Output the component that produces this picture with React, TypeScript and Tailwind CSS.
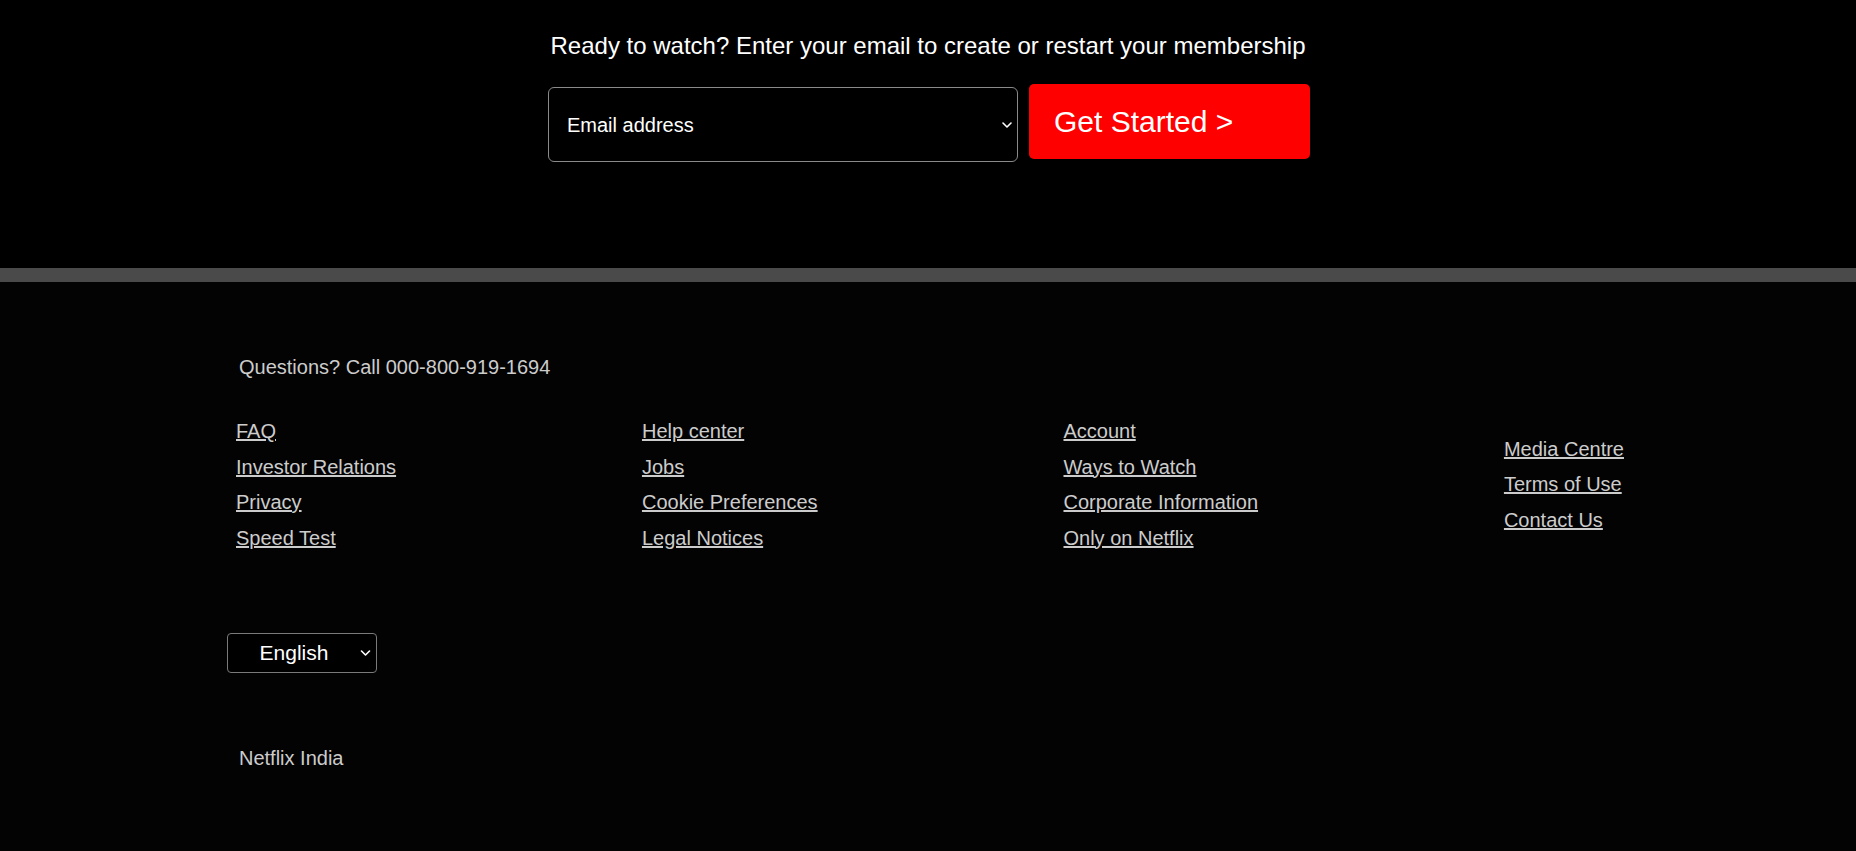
const footerColumns = [
  ["FAQ", "Investor Relations", "Privacy", "Speed Test"],
  ["Help center", "Jobs", "Cookie Preferences", "Legal Notices"],
  ["Account", "Ways to Watch", "Corporate Information", "Only on Netflix"],
  ["Media Centre", "Terms of Use", "Contact Us"],
];

function Chevron({ className }: { className?: string }) {
  return (
    <svg
      viewBox="0 0 10 6"
      fill="none"
      stroke="currentColor"
      strokeWidth="1.6"
      strokeLinecap="round"
      strokeLinejoin="round"
      className={className}
    >
      <path d="M1 1l4 4 4-4" />
    </svg>
  );
}

export default function App() {
  return (
    <div className="min-h-screen bg-[#030303] font-['Liberation_Sans',Arial,sans-serif]">
      <section className="h-[268px] bg-black pt-[32px]">
        <h3 className="text-center text-[24px] leading-[28px] text-white">
          Ready to watch? Enter your email to create or restart your membership
        </h3>
        <form className="ml-[2px] mt-[24px] flex items-start justify-center gap-[11px]">
          <div className="relative mt-[3px] h-[75px] w-[470px]">
            <select
              defaultValue="email"
              className="h-full w-full appearance-none rounded-[6px] border border-[#8a8a8a] bg-black pl-[18px] text-[20px] text-white outline-none"
            >
              <option value="email">Email address</option>
            </select>
            <Chevron className="pointer-events-none absolute right-[6px] top-[35px] h-[6px] w-[10px] text-white" />
          </div>
          <button
            type="button"
            className="h-[75px] w-[281px] rounded-[5px] bg-[#ff0000] pl-[25px] text-left text-[30px] text-white"
          >
            Get Started &gt;
          </button>
        </form>
      </section>

      <div className="h-[14px] bg-[#4a4a4a]" />

      <footer className="pb-[80px] pt-[74px]">
        <div className="mx-auto w-[1392px]">
          <p className="pl-[7px] text-[20px] leading-[23px] text-[#cccccc]">
            Questions? Call 000-800-919-1694
          </p>

          <div className="mt-[41px] flex items-center justify-between pl-[4px]">
            {footerColumns.map((col, i) => (
              <ul key={i} className="flex flex-col gap-[12.5px]">
                {col.map((item) => (
                  <li key={item} className="text-[20px] leading-[23px]">
                    <a href="#" className="text-[#cccccc] underline">
                      {item}
                    </a>
                  </li>
                ))}
              </ul>
            ))}
          </div>

          <div className="relative -ml-[5px] mt-[83px] h-[40px] w-[150px]">
            <select
              defaultValue="en"
              className="h-full w-full appearance-none rounded-[4px] border border-[#7a7a7a] bg-black pr-[16px] text-center text-[21px] text-white outline-none"
            >
              <option value="en">English</option>
              <option value="hi">हिन्दी</option>
            </select>
            <Chevron className="pointer-events-none absolute right-[6px] top-[17px] h-[6px] w-[11px] text-white" />
          </div>

          <p className="mt-[74px] pl-[7px] text-[20px] leading-[23px] text-[#cccccc]">Netflix India</p>
        </div>
      </footer>
    </div>
  );
}
